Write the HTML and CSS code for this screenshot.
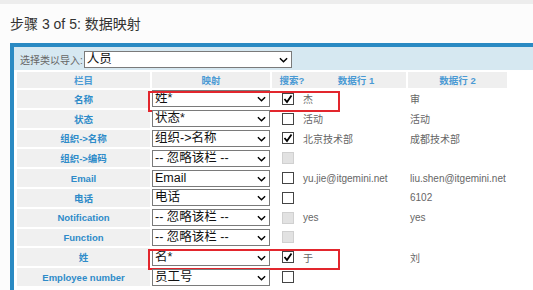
FILE: index.html
```html
<!DOCTYPE html>
<html lang="zh">

<head>
    <meta charset="UTF-8">
    <title>数据映射</title>
    <link rel="stylesheet" href="styles.css">
</head>

<body>
    <div class="top-band"></div>
    <h1 class="step-title">步骤 3 of 5: 数据映射</h1>

    <div class="panel">
        <div class="class-row">
            <span class="class-label">选择类以导入:</span>
            <div class="dropdown wide">人员
                <svg class="chev" viewBox="0 0 10 6"><path d="M1 1 L5 5 L9 1" /></svg>
            </div>
        </div>

        <div class="table-wrap">
            <table class="map-table">
                <colgroup>
                    <col class="c-field">
                    <col class="c-map">
                    <col class="c-search">
                    <col class="c-row1">
                    <col class="c-row2">
                </colgroup>
                <thead>
                    <tr>
                        <th>栏目</th>
                        <th>映射</th>
                        <th colspan="2">
                            <div class="split-head"><span class="h-search">搜索?</span><span class="h-row1">数据行 1</span></div>
                        </th>
                        <th>数据行 2</th>
                    </tr>
                </thead>
                <tbody>
                    <tr>
                        <td class="field">名称</td>
                        <td class="map"><div class="dropdown">姓*<svg class="chev" viewBox="0 0 10 6"><path d="M1 1 L5 5 L9 1" /></svg></div><span class="mark"></span></td>
                        <td class="search"><span class="cb on"><svg viewBox="0 0 10 10"><path d="M1.5 5 L4 8 L8.5 1.5" /></svg></span></td>
                        <td class="val">杰</td>
                        <td class="val v2">审</td>
                    </tr>
                    <tr>
                        <td class="field">状态</td>
                        <td class="map"><div class="dropdown">状态*<svg class="chev" viewBox="0 0 10 6"><path d="M1 1 L5 5 L9 1" /></svg></div></td>
                        <td class="search"><span class="cb"></span></td>
                        <td class="val">活动</td>
                        <td class="val v2">活动</td>
                    </tr>
                    <tr>
                        <td class="field">组织-&gt;名称</td>
                        <td class="map"><div class="dropdown">组织-&gt;名称<svg class="chev" viewBox="0 0 10 6"><path d="M1 1 L5 5 L9 1" /></svg></div></td>
                        <td class="search"><span class="cb on"><svg viewBox="0 0 10 10"><path d="M1.5 5 L4 8 L8.5 1.5" /></svg></span></td>
                        <td class="val">北京技术部</td>
                        <td class="val v2">成都技术部</td>
                    </tr>
                    <tr>
                        <td class="field">组织-&gt;编码</td>
                        <td class="map"><div class="dropdown">-- 忽略该栏 --<svg class="chev" viewBox="0 0 10 6"><path d="M1 1 L5 5 L9 1" /></svg></div></td>
                        <td class="search"><span class="cb off"></span></td>
                        <td class="val"></td>
                        <td class="val v2"></td>
                    </tr>
                    <tr>
                        <td class="field">Email</td>
                        <td class="map"><div class="dropdown">Email<svg class="chev" viewBox="0 0 10 6"><path d="M1 1 L5 5 L9 1" /></svg></div></td>
                        <td class="search"><span class="cb"></span></td>
                        <td class="val">yu.jie@itgemini.net</td>
                        <td class="val v2">liu.shen@itgemini.net</td>
                    </tr>
                    <tr>
                        <td class="field">电话</td>
                        <td class="map"><div class="dropdown">电话<svg class="chev" viewBox="0 0 10 6"><path d="M1 1 L5 5 L9 1" /></svg></div></td>
                        <td class="search"><span class="cb"></span></td>
                        <td class="val"></td>
                        <td class="val v2">6102</td>
                    </tr>
                    <tr>
                        <td class="field">Notification</td>
                        <td class="map"><div class="dropdown">-- 忽略该栏 --<svg class="chev" viewBox="0 0 10 6"><path d="M1 1 L5 5 L9 1" /></svg></div></td>
                        <td class="search"><span class="cb off"></span></td>
                        <td class="val">yes</td>
                        <td class="val v2">yes</td>
                    </tr>
                    <tr>
                        <td class="field">Function</td>
                        <td class="map"><div class="dropdown">-- 忽略该栏 --<svg class="chev" viewBox="0 0 10 6"><path d="M1 1 L5 5 L9 1" /></svg></div></td>
                        <td class="search"><span class="cb off"></span></td>
                        <td class="val"></td>
                        <td class="val v2"></td>
                    </tr>
                    <tr>
                        <td class="field">姓</td>
                        <td class="map"><div class="dropdown">名*<svg class="chev" viewBox="0 0 10 6"><path d="M1 1 L5 5 L9 1" /></svg></div><span class="mark"></span></td>
                        <td class="search"><span class="cb on"><svg viewBox="0 0 10 10"><path d="M1.5 5 L4 8 L8.5 1.5" /></svg></span></td>
                        <td class="val">于</td>
                        <td class="val v2">刘</td>
                    </tr>
                    <tr>
                        <td class="field">Employee number</td>
                        <td class="map"><div class="dropdown">员工号<svg class="chev" viewBox="0 0 10 6"><path d="M1 1 L5 5 L9 1" /></svg></div></td>
                        <td class="search"><span class="cb"></span></td>
                        <td class="val"></td>
                        <td class="val v2"></td>
                    </tr>
                </tbody>
            </table>
        </div>
    </div>
</body>

</html>
```

FILE: styles.css
```css
html,
body {
    margin: 0;
    padding: 0;
    height: 290px;
    overflow: hidden;
}

body {
    font-family: "Liberation Sans", "Noto Sans CJK SC", sans-serif;
    background-color: #fcfcfc;
}

.top-band {
    height: 4px;
    background-color: #ededed;
}

.step-title {
    margin: 0;
    height: 39px;
    padding-left: 10px;
    font-size: 14px;
    font-weight: normal;
    line-height: 40px;
    color: #333;
}

.panel {
    margin-left: 10px;
    border-top: 4px solid #2a8ac3;
    border-left: 4px solid #2a8ac3;
    background-color: #d6e8f1;
    height: 243px;
    overflow: hidden;
}

.class-row {
    display: flex;
    align-items: center;
    height: 23px;
    padding-left: 6px;
    padding-top: 2px;
    box-sizing: border-box;
}

.class-label {
    font-size: 10px;
    color: #666;
    margin-right: 1px;
}

.dropdown {
    position: relative;
    box-sizing: border-box;
    height: 17px;
    border: 1px solid #7a7a7a;
    background-color: #fff;
    font-size: 12.5px;
    line-height: 15px;
    padding-left: 2px;
    color: #111;
    white-space: nowrap;
}

.dropdown.wide {
    width: 208px;
}

.chev {
    position: absolute;
    right: 3px;
    top: 5px;
    width: 9px;
    height: 6px;
    fill: none;
    stroke: #000;
    stroke-width: 1.6;
}

.table-wrap {
    background-color: #fff;
    padding-left: 1px;
    height: 220px;
}

.map-table {
    border-collapse: separate;
    border-spacing: 2px;
    table-layout: fixed;
}

.c-field { width: 133px; }
.c-map { width: 118px; }
.c-search { width: 28px; }
.c-row1 { width: 104px; }
.c-row2 { width: 99px; }

.map-table th {
    height: 16px;
    padding: 0;
    background-color: #efefef;
    color: #4a9ad4;
    font-size: 9.5px;
    font-weight: bold;
    text-align: center;
}

.split-head {
    display: flex;
}

.h-search {
    width: 40px;
    text-align: center;
}

.h-row1 {
    flex: 1;
    text-align: center;
    padding-right: 6px;
}

.map-table td {
    height: 17.8px;
    padding: 0;
    vertical-align: middle;
}

.field {
    background-color: #f0f0f0;
    color: #2e8bc9;
    font-size: 9.5px;
    font-weight: bold;
    text-align: center;
}

.map {
    position: relative;
}

.mark {
    position: absolute;
    left: -4px;
    top: 1px;
    width: 192px;
    height: 21px;
    box-sizing: border-box;
    border: 2px solid #e2262d;
}

.search {
    padding-left: 10px !important;
}

.cb {
    display: block;
    box-sizing: border-box;
    width: 12px;
    height: 12px;
    border: 1px solid #444;
    background-color: #fff;
}

.cb svg {
    display: block;
    width: 10px;
    height: 10px;
    fill: none;
    stroke: #000;
    stroke-width: 1.8;
}

.cb.off {
    border-color: #d0d0d0;
    background-color: #e2e2e2;
}

.val {
    font-size: 10px;
    color: #666;
    padding-left: 1px !important;
    white-space: nowrap;
}

.val.v2 {
    padding-left: 2px !important;
}
```
